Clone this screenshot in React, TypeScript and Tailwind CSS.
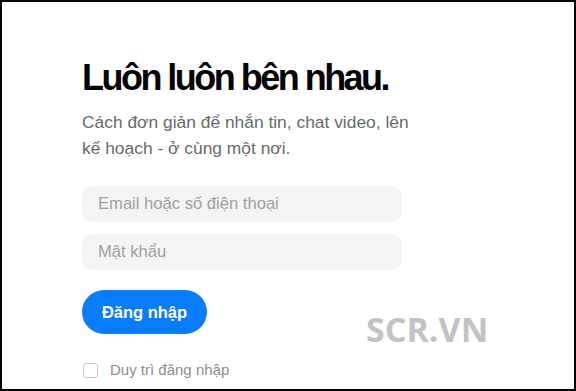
export default function App() {
  return (
    <div className="w-[576px] h-[391px] border-2 border-black bg-white overflow-hidden relative" style={{ fontFamily: '"Liberation Sans", Arial, sans-serif' }}>
      <div className="pl-[80px] pt-[54px] flex flex-col">
        <h1 className="text-[36px] leading-[44px] font-bold text-[#050505] tracking-[-0.07em]">Luôn luôn bên nhau.</h1>
        <p className="mt-[9px] text-[17.4px] leading-[26px] text-[#6a6a6a] w-[345px]">Cách đơn giản để nhắn tin, chat video, lên kế hoạch - ở cùng một nơi.</p>
        <div className="mt-[25px] flex flex-col gap-[12px]">
          <div className="w-[320px] h-[36px] rounded-[10px] bg-[#f4f4f4] flex items-center pl-[16px] text-[16.6px] text-[#a0a0a0]">Email hoặc số điện thoại</div>
          <div className="w-[320px] h-[36px] rounded-[10px] bg-[#f4f4f4] flex items-center pl-[16px] text-[16.6px] text-[#a0a0a0]">Mật khẩu</div>
        </div>
        <button className="mt-[20px] w-[125px] h-[44px] rounded-full bg-[#0a7cff] text-white font-bold text-[16.5px] flex items-center justify-center">Đăng nhập</button>
        <div className="mt-[25px] flex items-center gap-[12px]">
          <div className="w-[15px] h-[15px] border border-[#c8c8c8] rounded-[3px] ml-[1px]" />
          <span className="text-[15px] text-[#8e8e8e]">Duy trì đăng nhập</span>
        </div>
      </div>
      <div className="absolute left-[364px] top-[302px] text-[34px] font-bold text-[#c3c3c3]" style={{ fontFamily: '"Open Sans", sans-serif' }}>SCR.VN</div>
    </div>
  );
}
